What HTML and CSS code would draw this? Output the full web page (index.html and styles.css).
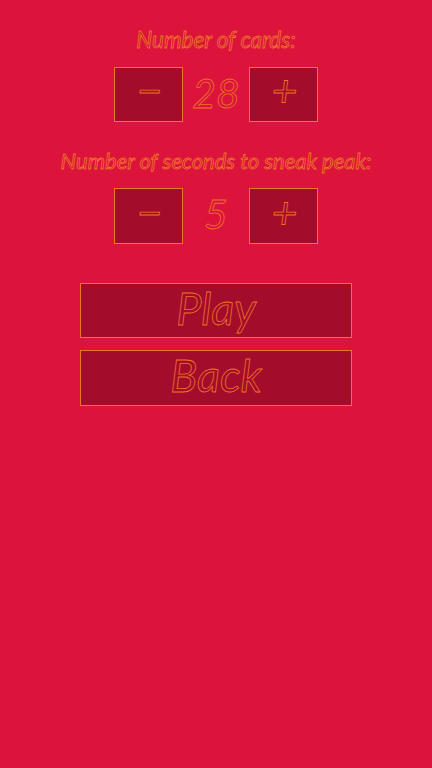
FILE: index.html
```html
<!DOCTYPE html>
<html lang="en">
<head>
<meta charset="utf-8">
<title>Settings</title>
<link rel="stylesheet" href="styles.css">
</head>
<body>
<main class="screen">
  <h2 class="label">Number of cards:</h2>
  <div class="stepper">
    <button class="btn step"><span class="minus">−</span></button>
    <span class="value">28</span>
    <button class="btn step"><span class="plus">+</span></button>
  </div>
  <h2 class="label second">Number of seconds to sneak peak:</h2>
  <div class="stepper">
    <button class="btn step tall"><span class="minus">−</span></button>
    <span class="value">5</span>
    <button class="btn step tall"><span class="plus">+</span></button>
  </div>
  <button class="btn wide first">Play</button>
  <button class="btn wide">Back</button>
</main>
</body>
</html>
```
FILE: styles.css
```css
* { box-sizing: border-box; }
html, body { margin: 0; height: 100%; }
body { background: #dc143c; overflow: hidden; }
.screen {
  display: flex;
  flex-direction: column;
  align-items: center;
  padding-top: 27px;
  width: 432px;
  height: 768px;
}
.label, .value, .btn {
  font-family: "Lato", "DejaVu Sans", sans-serif;
  font-style: italic;
  font-weight: 400;
  color: transparent;
  -webkit-text-stroke: 0.8px #ee7428;
}
.label {
  margin: 0;
  height: 26px;
  line-height: 26px;
  font-size: 22.5px;
  white-space: nowrap;
}
.second { margin-top: 26px; font-size: 22px; }
.stepper {
  display: flex;
  align-items: center;
  justify-content: center;
  margin-top: 14px;
}
.btn {
  display: flex;
  align-items: center;
  justify-content: center;
  padding: 0;
  background: #a30d2b;
  border: 1px solid #e67a20;
  border-radius: 0;
}
.step { width: 69px; height: 55px; font-size: 45px; line-height: 1; }
.tall { height: 56px; }
.minus { display: block; transform: translate(1px, -4px); }
.plus { display: block; transform: translate(1px, -4px); }
.value {
  width: 66px;
  text-align: center;
  font-size: 41px;
  line-height: 1;
  padding-bottom: 5px;
}
.wide { width: 272px; height: 56px; font-size: 45px; margin-bottom: 11px; padding-bottom: 6px; }
.first { height: 55px; margin-top: 39px; margin-bottom: 12px; }
```
